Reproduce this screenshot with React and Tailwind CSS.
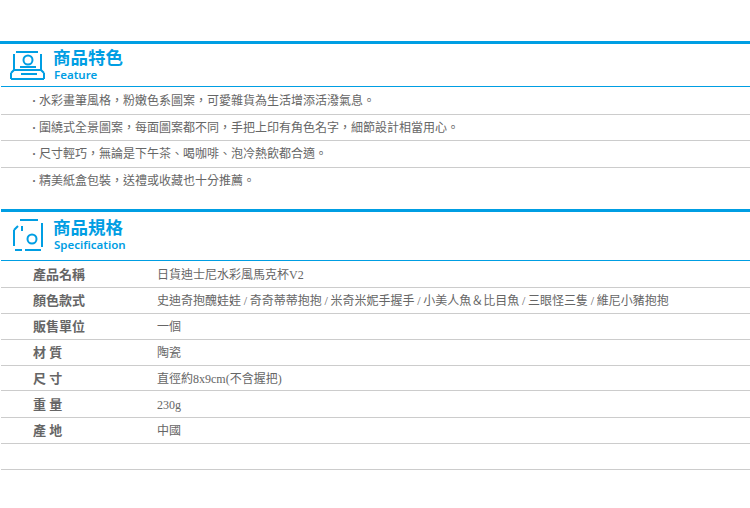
import React from "react";

const features = [
  ["水彩畫筆風格，粉嫩色系圖案，可愛雜貨為生活增添活潑氣息。", "h-[28px] pt-px border-b border-[#ccc]"],
  ["圍繞式全景圖案，每面圖案都不同，手把上印有角色名字，細節設計相當用心。", "h-[26px] border-b border-[#ccc]"],
  ["尺寸輕巧，無論是下午茶、喝咖啡、泡冷熱飲都合適。", "h-[27px] border-b border-[#ccc]"],
  ["精美紙盒包裝，送禮或收藏也十分推薦。", "h-[25px]"],
];

const specs = [
  ["產品名稱", "日貨迪士尼水彩風馬克杯V2", "h-[27px]"],
  ["顏色款式", "史迪奇抱醜娃娃 / 奇奇蒂蒂抱抱 / 米奇米妮手握手 / 小美人魚＆比目魚 / 三眼怪三隻 / 維尼小豬抱抱", "h-[26px]"],
  ["販售單位", "一個", "h-[26px]"],
  ["材 質", "陶瓷", "h-[26px]"],
  ["尺 寸", "直徑約8x9cm(不含握把)", "h-[25px]"],
  ["重 量", "230g", "h-[27px]"],
  ["產 地", "中國", "h-[26px]"],
  ["", "", "h-[26px]"],
];

function FeatureIcon() {
  return (
    <svg width="38" height="32" viewBox="0 0 38 32" fill="none" stroke="#009ee3" strokeWidth="2">
      <path d="M7 3h22M5 5v16M32 5v16" />
      <circle cx="19" cy="11" r="4.5" />
      <path d="M11 18h16M5 21h27M5 21l-3 3M32 21l3 3M12 25h16M2 24v6M35 24v6M2 30h33" />
    </svg>
  );
}

function SpecIcon() {
  return (
    <svg width="32" height="34" viewBox="0 0 32 34" fill="none" stroke="#009ee3" strokeWidth="2">
      <path d="M7 1h18M29 4v24M1 11v16M1 11l4-4M9 7v5M2 31h7M12 31h16" />
      <circle cx="19" cy="20" r="4.5" />
    </svg>
  );
}

function SectionHead({ icon, title, sub, barClass, bodyClass }) {
  return (
    <div>
      <div className={barClass} />
      <div className={`${bodyClass} ml-px flex border-b border-[#009ee3]`}>
        {icon}
        <div>
          <div className="text-[17.5px] leading-[20px] font-bold text-[#009ee3] font-['Noto_Sans_CJK_TC',sans-serif]">{title}</div>
          <div className="text-[11.5px] leading-[15px] pl-px font-semibold text-[#009ee3] font-['Noto_Sans',sans-serif]">{sub}</div>
        </div>
      </div>
    </div>
  );
}

export default function App() {
  return (
    <div className="w-[750px] h-[508px] bg-white pt-[41px] text-[12px] text-[#666] font-['Liberation_Serif','Noto_Sans_CJK_TC',serif] overflow-hidden">
      <SectionHead
        barClass="h-[3px] bg-[#009ee3]"
        bodyClass="h-[43px] pt-[3px]"
        icon={<div className="w-[52px] pl-[8px] pt-[2px]"><FeatureIcon /></div>}
        title="商品特色"
        sub="Feature"
      />
      {features.map(([text, rowClass]) => (
        <div key={text} className={`${rowClass} ml-px pl-[31px] flex items-center`}>
          <span className="w-[7px] font-bold">·</span>
          {text}
        </div>
      ))}
      <div className="h-[16px]" />
      <SectionHead
        barClass="h-[3px] ml-px bg-[#009ee3]"
        bodyClass="h-[49px] pt-[5px]"
        icon={<div className="w-[52px] pl-[12px] pt-[2px]"><SpecIcon /></div>}
        title="商品規格"
        sub="Specification"
      />
      {specs.map(([label, value, height], i) => (
        <div key={i} className={`${height} ml-px pt-px flex items-center border-b border-[#ccc]`}>
          <div className="w-[156px] pl-[32px] text-[13px] font-bold">{label}</div>
          <div className="[word-spacing:-0.3px]">{value}</div>
        </div>
      ))}
    </div>
  );
}
